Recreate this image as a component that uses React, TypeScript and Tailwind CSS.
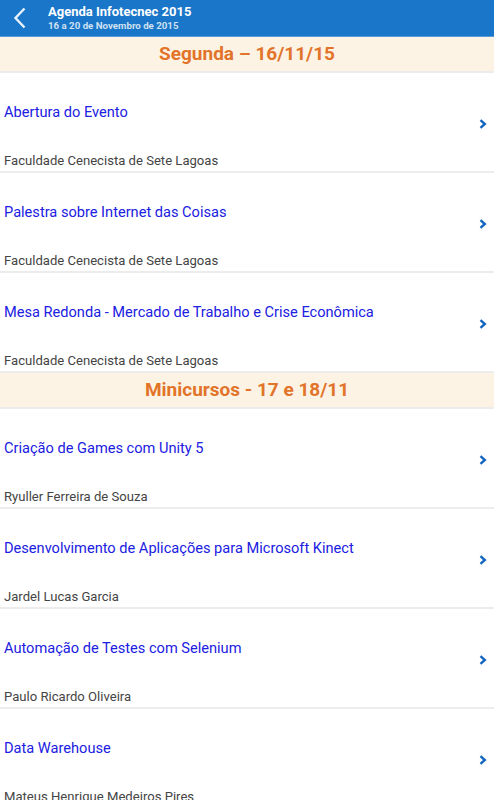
import React from 'react';

type Item = { title: string; sub: string };
type Section = { label: string; items: Item[] };

const sections: Section[] = [
  {
    label: 'Segunda – 16/11/15',
    items: [
      { title: 'Abertura do Evento', sub: 'Faculdade Cenecista de Sete Lagoas' },
      { title: 'Palestra sobre Internet das Coisas', sub: 'Faculdade Cenecista de Sete Lagoas' },
      { title: 'Mesa Redonda - Mercado de Trabalho e Crise Econômica', sub: 'Faculdade Cenecista de Sete Lagoas' },
    ],
  },
  {
    label: 'Minicursos - 17 e 18/11',
    items: [
      { title: 'Criação de Games com Unity 5', sub: 'Ryuller Ferreira de Souza' },
      { title: 'Desenvolvimento de Aplicações para Microsoft Kinect', sub: 'Jardel Lucas Garcia' },
      { title: 'Automação de Testes com Selenium', sub: 'Paulo Ricardo Oliveira' },
      { title: 'Data Warehouse', sub: 'Mateus Henrique Medeiros Pires' },
    ],
  },
];

function Chevron() {
  return (
    <svg width="8" height="10" viewBox="0 0 8 10" className="shrink-0">
      <path d="M1.5 1.2 L5.8 5 L1.5 8.8" fill="none" stroke="#1565c0" strokeWidth="2.4" strokeLinejoin="miter" />
    </svg>
  );
}

function Row({ item }: { item: Item }) {
  return (
    <div className="relative h-[100px] border-b-2 border-[#ececec] bg-white">
      <div className="absolute left-1 top-[29px] text-[14.6px] leading-5 text-[#2020e2]">{item.title}</div>
      <div className="absolute left-1 top-[80px] text-[13.1px] leading-4 text-[#444]">{item.sub}</div>
      <div className="absolute right-[7px] top-[46px]">
        <Chevron />
      </div>
    </div>
  );
}

export default function App() {
  return (
    <div className="w-[494px] h-[800px] overflow-hidden bg-white" style={{ fontFamily: 'Roboto, "Noto Sans", sans-serif' }}>
      <div className="flex h-[37px] items-center bg-[#1a76c9] border-b border-[#5a9ad6]">
        <svg width="40" height="37" viewBox="0 0 40 37" className="shrink-0">
          <path d="M24.5 8.5 L15.5 18 L24.5 27.5" fill="none" stroke="#e8f1fb" strokeWidth="2.4" />
        </svg>
        <div className="ml-2 flex flex-col">
          <span className="text-[13px] font-bold leading-[15px] text-white">Agenda Infotecnec 2015</span>
          <span className="mt-[1px] text-[9.7px] font-bold leading-[12px] text-[#cfe1f3]">16 a 20 de Novembro de 2015</span>
        </div>
      </div>
      {sections.map((s) => (
        <div key={s.label}>
          <div className="flex h-[36px] items-center justify-center border-b-2 border-[#ececec] bg-[#fdf3e4]">
            <span className="text-[19px] font-bold text-[#e2742a]">{s.label}</span>
          </div>
          {s.items.map((it) => (
            <Row key={it.title} item={it} />
          ))}
        </div>
      ))}
    </div>
  );
}
